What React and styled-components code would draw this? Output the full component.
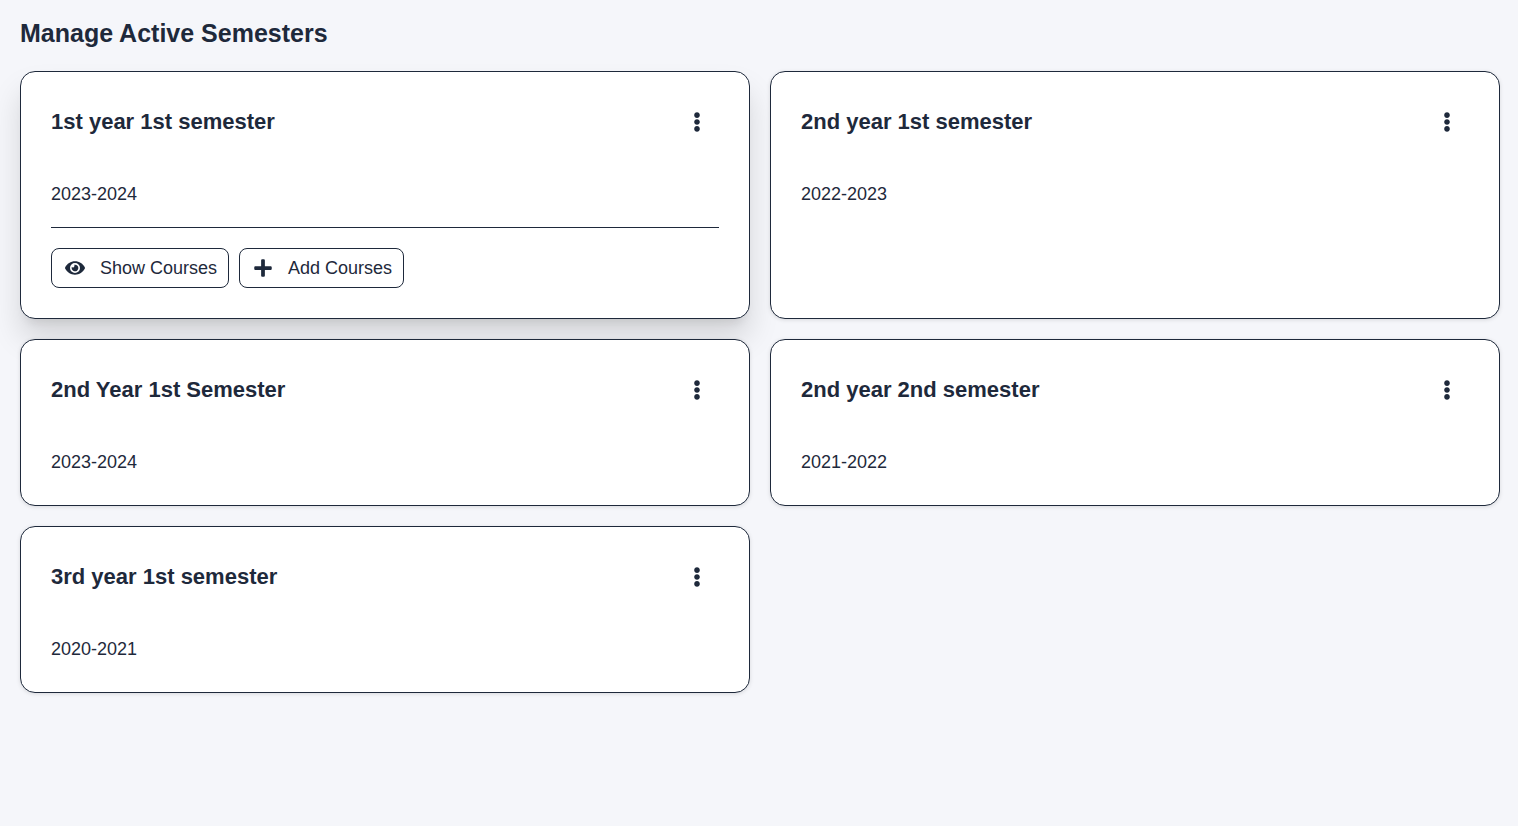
import React from "react";
import styled, { createGlobalStyle, css } from "styled-components";
import { FaEllipsisV, FaEye, FaPlus } from "react-icons/fa";

const GlobalStyle = createGlobalStyle`
  *, *::before, *::after { box-sizing: border-box; }
  body {
    margin: 0;
    background: #f5f6fa;
    color: #1e293b;
    font-family: "Liberation Sans", Arial, sans-serif;
    font-size: 18px;
  }
`;

const Page = styled.main`
  padding: 18px 18px 20px 20px;
`;

const PageTitle = styled.h1`
  margin: 0 0 23px;
  font-size: 25px;
  line-height: 30px;
`;

const Grid = styled.ul`
  display: grid;
  grid-template-columns: repeat(2, minmax(0, 1fr));
  gap: 20px;
  margin: 0;
  padding: 0;
  list-style: none;
`;

const Card = styled.li`
  display: flex;
  flex-direction: column;
  padding: 30px;
  border: 1px solid #1e293b;
  border-radius: 15px;
  background: #fff;
  box-shadow: 0 1px 4px rgba(0, 0, 0, 0.12);
  ${({ $open }) =>
    $open &&
    css`
      box-shadow: 0 8px 10px -5px rgba(0, 0, 0, 0.09), 0 20px 30px rgba(0, 0, 0, 0.13);
    `}
`;

const CardHeader = styled.header`
  display: flex;
  align-items: center;
  justify-content: space-between;
  height: 40px;
  margin-bottom: 40px;
`;

const CardTitle = styled.h2`
  margin: 0;
  font-size: 22px;
  line-height: 26px;
`;

const MenuButton = styled.button`
  display: flex;
  align-items: center;
  justify-content: center;
  width: 44px;
  height: 40px;
  padding: 0;
  border: 0;
  background: none;
  color: inherit;
  font-size: 20px;
  cursor: pointer;
`;

const Session = styled.p`
  margin: 0;
  line-height: 25px;
`;

const Actions = styled.div`
  display: flex;
  gap: 10px;
  margin-top: 20px;
  padding-top: 20px;
  border-top: 1px solid #1e293b;
`;

const ActionButton = styled.button`
  display: flex;
  align-items: center;
  gap: 15px;
  height: 40px;
  padding: 0 11px 0 13px;
  border: 1px solid #1e293b;
  border-radius: 8px;
  background: #fff;
  color: inherit;
  font: inherit;
  cursor: pointer;

  svg {
    width: 20px;
    height: 20px;
  }
`;

const semesters = [
  { name: "1st year 1st semester", session: "2023-2024", open: true },
  { name: "2nd year 1st semester", session: "2022-2023" },
  { name: "2nd Year 1st Semester", session: "2023-2024" },
  { name: "2nd year 2nd semester", session: "2021-2022" },
  { name: "3rd year 1st semester", session: "2020-2021" },
];

function SemesterCard({ name, session, open }) {
  return (
    <Card $open={open}>
      <CardHeader>
        <CardTitle>{name}</CardTitle>
        <MenuButton type="button" aria-label={`Options for ${name}`}>
          <FaEllipsisV />
        </MenuButton>
      </CardHeader>
      <Session>{session}</Session>
      {open && (
        <Actions>
          <ActionButton type="button">
            <FaEye />
            Show Courses
          </ActionButton>
          <ActionButton type="button">
            <FaPlus />
            Add Courses
          </ActionButton>
        </Actions>
      )}
    </Card>
  );
}

export default function App() {
  return (
    <>
      <GlobalStyle />
      <Page>
        <PageTitle>Manage Active Semesters</PageTitle>
        <Grid>
          {semesters.map((semester) => (
            <SemesterCard key={`${semester.name}-${semester.session}`} {...semester} />
          ))}
        </Grid>
      </Page>
    </>
  );
}
